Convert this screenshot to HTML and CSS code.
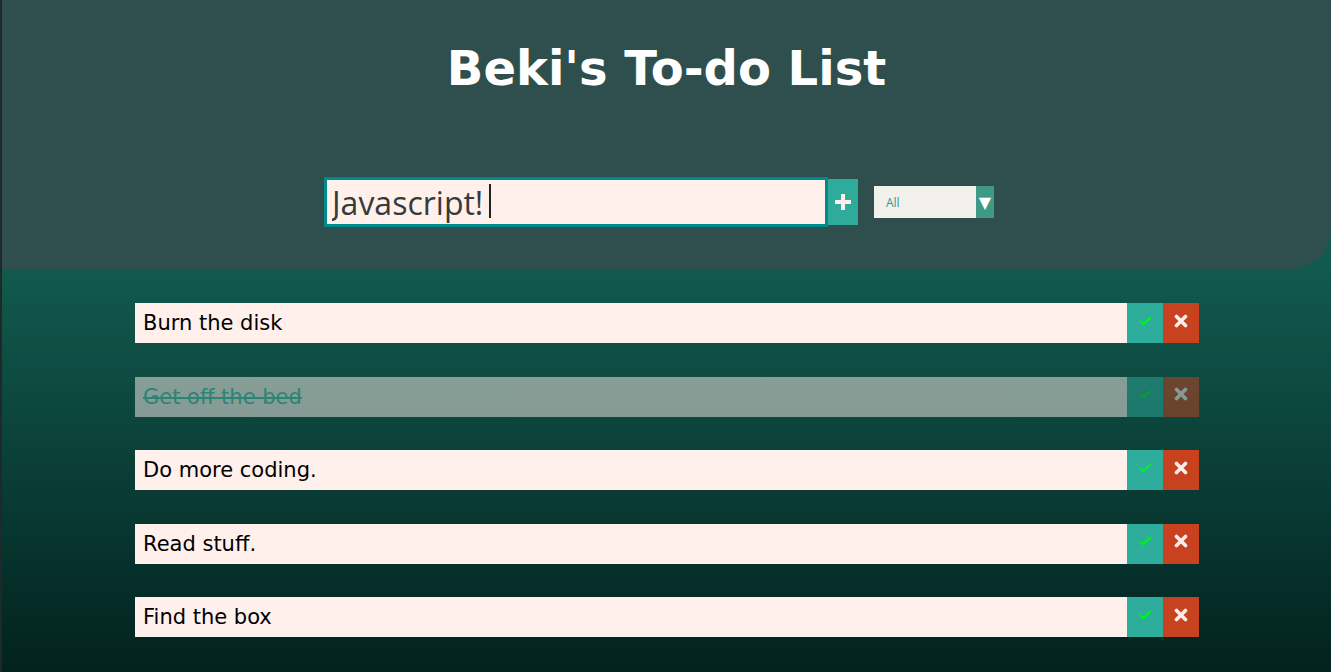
FILE: index.html
```html
<!DOCTYPE html>
<html>
<head>
<meta charset="utf-8">
<link rel="stylesheet" href="styles.css">
</head>
<body>
<header class="top">
  <h1 class="title">Beki's To-do List</h1>
  <form class="add-form">
    <div class="input-wrap"><input class="todo-input" type="text" value="Javascript!"><span class="caret"></span></div>
    <button class="add-btn" type="button">
      <svg width="16" height="16" viewBox="0 0 16 16"><rect x="6" y="0" width="4" height="16" fill="#fdeeea"/><rect x="0" y="6" width="16" height="4" fill="#fdeeea"/></svg>
    </button>
    <div class="select">
      <span class="select-label">All</span>
      <span class="select-arrow">▼</span>
    </div>
  </form>
</header>
<main class="list">
  <div class="todo">
    <span class="todo-text">Burn the disk</span>
    <button class="check-btn"><svg width="13" height="10" viewBox="0 0 13 10"><path d="M1 5 L4.5 8.3 L12 1" fill="none" stroke="#00f020" stroke-width="2.2"/></svg></button>
    <button class="trash-btn"><svg width="14" height="14" viewBox="0 0 14 14"><path d="M2.5 2.5 L11.5 11.5 M11.5 2.5 L2.5 11.5" stroke="#fdeeea" stroke-width="3.6" stroke-linecap="round"/></svg></button>
  </div>
  <div class="todo completed">
    <span class="todo-text">Get off the bed</span>
    <button class="check-btn"><svg width="13" height="10" viewBox="0 0 13 10"><path d="M1 5 L4.5 8.3 L12 1" fill="none" stroke="#00f020" stroke-width="2.2"/></svg></button>
    <button class="trash-btn"><svg width="14" height="14" viewBox="0 0 14 14"><path d="M2.5 2.5 L11.5 11.5 M11.5 2.5 L2.5 11.5" stroke="#fdeeea" stroke-width="3.6" stroke-linecap="round"/></svg></button>
  </div>
  <div class="todo">
    <span class="todo-text">Do more coding.</span>
    <button class="check-btn"><svg width="13" height="10" viewBox="0 0 13 10"><path d="M1 5 L4.5 8.3 L12 1" fill="none" stroke="#00f020" stroke-width="2.2"/></svg></button>
    <button class="trash-btn"><svg width="14" height="14" viewBox="0 0 14 14"><path d="M2.5 2.5 L11.5 11.5 M11.5 2.5 L2.5 11.5" stroke="#fdeeea" stroke-width="3.6" stroke-linecap="round"/></svg></button>
  </div>
  <div class="todo">
    <span class="todo-text">Read stuff.</span>
    <button class="check-btn"><svg width="13" height="10" viewBox="0 0 13 10"><path d="M1 5 L4.5 8.3 L12 1" fill="none" stroke="#00f020" stroke-width="2.2"/></svg></button>
    <button class="trash-btn"><svg width="14" height="14" viewBox="0 0 14 14"><path d="M2.5 2.5 L11.5 11.5 M11.5 2.5 L2.5 11.5" stroke="#fdeeea" stroke-width="3.6" stroke-linecap="round"/></svg></button>
  </div>
  <div class="todo">
    <span class="todo-text">Find the box</span>
    <button class="check-btn"><svg width="13" height="10" viewBox="0 0 13 10"><path d="M1 5 L4.5 8.3 L12 1" fill="none" stroke="#00f020" stroke-width="2.2"/></svg></button>
    <button class="trash-btn"><svg width="14" height="14" viewBox="0 0 14 14"><path d="M2.5 2.5 L11.5 11.5 M11.5 2.5 L2.5 11.5" stroke="#fdeeea" stroke-width="3.6" stroke-linecap="round"/></svg></button>
  </div>
</main>
</body>
</html>
```
FILE: styles.css
```css
* { box-sizing: border-box; }
html, body { height: 100%; }
body {
  margin: 0;
  min-height: 672px;
  font-family: "DejaVu Sans", sans-serif;
  background: linear-gradient(to bottom, #145f52 0%, #125a4e 40%, #02221f 100%);
  border-left: 2px solid #1e2a28;
  overflow: hidden;
}
.top {
  background: #2f4f4f;
  height: 269px;
  border-bottom-right-radius: 40px;
  display: flex;
  flex-direction: column;
  align-items: center;
}
.title {
  margin: 38px 0 0;
  font-family: "DejaVu Sans", sans-serif;
  font-weight: bold;
  font-size: 48px;
  line-height: 60px;
  color: #ffffff;
}
.add-form {
  margin-top: 79px;
  display: flex;
  align-items: center;
  margin-right: 15px;
}
.input-wrap {
  position: relative;
  width: 504px;
  height: 50px;
}
.todo-input {
  width: 100%;
  height: 100%;
  border: 3px solid #008b8b;
  background: #fff0ec;
  font-family: "Open Sans", sans-serif;
  font-size: 32px;
  color: #333b3b;
  padding: 0 0 0 5px;
  outline: none;
}
.caret {
  position: absolute;
  left: 165px;
  top: 7px;
  width: 2px;
  height: 34px;
  background: #222;
}
.add-btn {
  width: 30px;
  height: 46px;
  border: none;
  background: #2eab9b;
  display: flex;
  align-items: center;
  justify-content: center;
  padding: 0;
}
.select {
  margin-left: 16px;
  width: 120px;
  height: 32px;
  background: #f2f0ed;
  display: flex;
  align-items: center;
}
.select-label {
  flex: 1;
  font-family: "Open Sans", sans-serif;
  font-size: 12px;
  color: #2a9c8c;
  padding-left: 12px;
}
.select-arrow {
  width: 18px;
  height: 32px;
  background: #3e9a86;
  color: #fff;
  font-size: 16px;
  display: flex;
  align-items: center;
  justify-content: center;
}
.list {
  display: flex;
  flex-direction: column;
  gap: 33.5px;
  padding: 34px 0 0 133px;
}
.todo {
  display: flex;
  width: 1064px;
  height: 40px;
}
.todo-text {
  flex: 1;
  background: #fff0ec;
  font-family: "DejaVu Sans", sans-serif;
  font-size: 21px;
  color: #000;
  display: flex;
  align-items: center;
  padding-left: 8px;
}
.check-btn, .trash-btn {
  width: 36px;
  height: 40px;
  border: none;
  padding: 0 0 5px;
  display: flex;
  align-items: center;
  justify-content: center;
}
.check-btn { background: #2eac9c; }
.trash-btn { background: #c8421f; }
.completed { opacity: 0.5; }
.completed .todo-text {
  color: #4ac2ad;
  text-decoration: line-through;
}
```
